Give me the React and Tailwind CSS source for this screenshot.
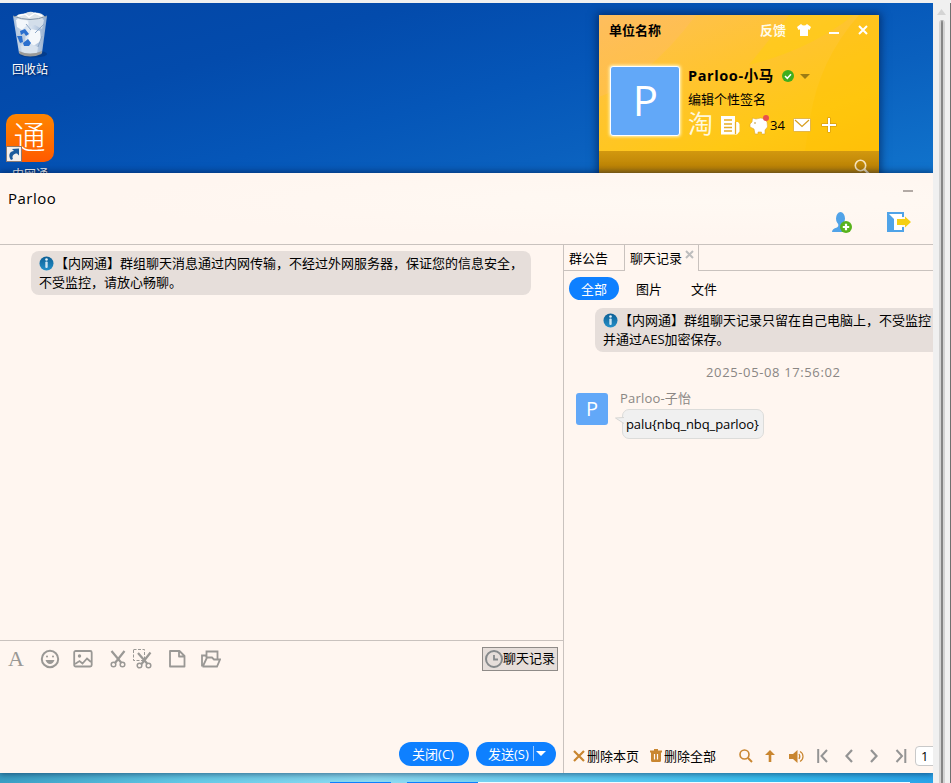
import React from 'react';

function RecycleBin() {
  return (
    <svg width="38" height="48" viewBox="0 0 38 48">
      <defs>
        <linearGradient id="bin" x1="0" x2="1">
          <stop offset="0" stopColor="#a9bfda" />
          <stop offset=".45" stopColor="#e3ebf4" />
          <stop offset="1" stopColor="#8ea9cc" />
        </linearGradient>
      </defs>
      <ellipse cx="22" cy="43" rx="14" ry="3.5" fill="#04306f" opacity=".5" />
      <path d="M2 5 L36 5 L31 42 Q19 47 8 42 Z" fill="url(#bin)" />
      <path d="M5 9 L12 5 L18 12 L11 19 L6 16 Z" fill="#f3f7fb" />
      <path d="M17 7 L27 5 L33 9 L31 18 L24 14 L18 16 Z" fill="#d3deea" />
      <path d="M20 18 L29 20 L30 30 L22 35 L17 28 Z" fill="#f5f8fb" />
      <path d="M7 23 L15 20 L14 31 L9 34 Z" fill="#b9cbe0" />
      <path d="M10 35 L18 32 L27 36 L26 42 L11 42 Z" fill="#d9e3ee" />
      <path d="M24 22 L33 13 M27 36 L31 25 M15 13 L20 19" stroke="#8fa8c6" strokeWidth="1" />
      <path d="M4 6 Q8 2 13 3 Q19 -1 24 2 Q30 1 34 6 Q28 10 19 9 Q10 10 4 6 Z" fill="#dfe5e9" />
      <path d="M7 5 L14 3 L18 6 L24 2 L31 5" stroke="#fff" strokeWidth="1.5" fill="none" />
      <path d="M2 5 Q19 12 36 5" stroke="#7c8fa3" strokeWidth="1" fill="none" />
      <path d="M8 40 Q19 45 31 40 L30.500 43 Q19 48 8.500 43 Z" fill="#9a9a98" />
      <g fill="#2a6fce">
        <path d="M9 20 L14 18 L18 23 L15 25 L13 22 L10 24 Z" />
        <path d="M6 25 L11 25 L12 31 L9 32 Z" />
        <path d="M12 32 L17 28 L20 32 L18 35 L13 35 Z" />
      </g>
    </svg>
  );
}

function InfoIcon() {
  return (
    <svg width="15" height="15" viewBox="0 0 15 15" className="mr-[5px] inline-block align-[-3px]">
      <defs>
        <linearGradient id="info" x1="0" y1="0" x2="0" y2="1">
          <stop offset="0" stopColor="#0d5f95" />
          <stop offset="1" stopColor="#2490c9" />
        </linearGradient>
      </defs>
      <circle cx="7.500" cy="7.500" r="7" fill="url(#info)" />
      <circle cx="7.500" cy="3.500" r="1.300" fill="#e7f3fa" />
      <rect x="6.300" y="5.600" width="2.400" height="6.400" rx="1" fill="#cfe5f2" />
    </svg>
  );
}

function Desktop() {
  return (
    <>
      <div className="absolute top-[8px] left-0 flex w-[60px] flex-col items-center text-[12px] text-white [text-shadow:1px_1px_2px_#001b50]">
        <RecycleBin />
        <span className="mt-[3px] leading-[16px]">回收站</span>
      </div>
      <div className="absolute top-[111px] left-[6px] flex w-[48px] flex-col items-center text-[12px] text-white [text-shadow:1px_1px_2px_#001b50]">
        <div className="relative flex h-[48px] w-[48px] items-center justify-center rounded-[10px] bg-gradient-to-b from-[#ff8500] to-[#ff5900] [text-shadow:none]">
          <span className="mt-[-3px] ml-[-1px] text-[32px] leading-[40px] font-light">通</span>
          <svg width="16" height="16" viewBox="0 0 16 16" className="absolute bottom-0 left-0">
            <rect x=".5" y=".5" width="15" height="15" fill="#f4efec" stroke="#8a7a74" />
            <path d="M5 14 C1.500 9 4 5 8 5 L6 3 L13 2.500 L13 9.500 L11 7.500 C7.500 7.500 5.500 10 7 13 Z" fill="#1c5a9c" />
          </svg>
        </div>
        <span className="mt-[5px] leading-[16px] whitespace-nowrap">内网通</span>
      </div>
    </>
  );
}

function ContactsWindow() {
  return (
    <div className="absolute top-[12px] left-[599px] flex h-[170px] w-[280px] flex-col bg-[linear-gradient(160deg,#fec056_0%,#ffc430_35%,#ffc814_65%,#ffbb08_100%)] text-[13px] shadow-[0_0_8px_2px_rgba(0,25,70,0.6)]">
      <div className="relative flex h-[136px] shrink-0 flex-col overflow-hidden">
        <svg className="absolute inset-0" width="280" height="136">
          <path d="M0 0 H97 Q72 34 43 57 Q20 75 0 82 Z" fill="#ffb870" opacity=".3" />
          <path d="M280 0 H260 Q220 45 211 104 L206 136 H280 Z" fill="#ffc400" opacity=".35" />
          <path d="M150 50 Q210 35 255 0 H190 Z" fill="#ffd500" opacity=".35" />
        </svg>
        <div className="relative flex h-[29px] items-center pr-[11px] pl-[10px]">
          <span className="flex-1 leading-[18px] font-bold">单位名称</span>
          <span className="mr-[11px] leading-[18px] font-bold text-[#fffbe9]">反馈</span>
          <svg width="14" height="12" viewBox="0 0 14 12" className="mt-px mr-[18px]">
            <path d="M4 0 Q7 3 10 0 L14 3 L12.500 6 L11 5.300 V12 H3 V5.300 L1.500 6 L0 3 Z" fill="#fff" />
          </svg>
          <span className="mt-[6px] mr-[19px] h-[2px] w-[10px] bg-white" />
          <svg width="10" height="10" viewBox="0 0 10 10">
            <path d="M1 1 L9 9 M9 1 L1 9" stroke="#fff" strokeWidth="2" />
          </svg>
        </div>
        <div className="relative flex pt-[22px] pl-[11px]">
          <div className="flex h-[70px] w-[70px] items-center justify-center rounded-[3px] border border-white bg-[#62a8f8] text-[42px] leading-[40px] text-white shadow-[0_0_3px_1px_#fff2b8]">
            <span className="mt-[-2px] ml-px">P</span>
          </div>
          <div className="flex flex-col pl-[8px]">
            <div className="flex h-[20px] items-center">
              <span className="w-[87px] text-[14.500px] leading-[20px] font-bold tracking-[0.6px] whitespace-nowrap">Parloo-小马</span>
              <svg width="12" height="12" viewBox="0 0 12 12" className="ml-[7px]">
                <circle cx="6" cy="6" r="6" fill="#3fae1e" />
                <path d="M3 6 L5.300 8.300 L9 4.300" stroke="#fff" strokeWidth="1.500" fill="none" />
              </svg>
              <svg width="10" height="5" viewBox="0 0 10 5" className="ml-[6px]">
                <path d="M0 0 H10 L5 5 Z" fill="#9c7c14" />
              </svg>
            </div>
            <span className="mt-[4px] leading-[18px]">编辑个性签名</span>
            <div className="mt-[5px] flex h-[24px] items-center">
              <span className="mt-[-4px] w-[25px] text-[25px] leading-[24px] text-[#fff8dc]">淘</span>
              <svg width="19" height="19" viewBox="0 0 19 19" className="ml-[8px]">
                <path d="M0 0 H14 V6 H17 L18.500 8 V15.500 L16 18.500 H0 Z" fill="#fff" />
                <path d="M3 4 H11 M3 8 H11 M3 11.500 H11 M3 15 H11 M14.500 6 V18" stroke="#e7ad25" strokeWidth="1.300" />
              </svg>
              <svg width="21" height="20" viewBox="0 0 21 20" className="ml-[9px]">
                <path d="M3 7 L3.500 3 L7 4 Q12 2 16 4 Q19 7 18.500 12 L16 15 V19 H12.500 V17 H9 V19 H6 L5 14 L1 12 V9 Z" fill="#fff" stroke="#dca62c" strokeWidth=".6" />
                <circle cx="6" cy="8" r=".8" fill="#b98a1c" />
                <circle cx="17" cy="3" r="3" fill="#ea4f4c" />
              </svg>
              <span className="w-[16px] text-[13px] leading-[18px]">34</span>
              <svg width="18" height="14" viewBox="0 0 18 14" className="ml-[7px]">
                <rect x=".5" y=".5" width="17" height="13" rx="1" fill="#fff" stroke="#cf9720" strokeWidth=".6" />
                <path d="M2 2 L9 8.500 L16 2" stroke="#d79e1e" strokeWidth="1.200" fill="none" />
              </svg>
              <svg width="16" height="16" viewBox="0 0 16 16" className="ml-[10px]">
                <path d="M8 .5 V15.500 M.5 8 H15.500" stroke="#c98f14" strokeWidth="3" />
                <path d="M8 1 V15 M1 8 H15" stroke="#fff" strokeWidth="2" />
              </svg>
            </div>
          </div>
        </div>
      </div>
      <div className="flex h-[34px] justify-end bg-[linear-gradient(#d2980f,#b27a00_24px)] pt-[8px] pr-[9px]">
        <svg width="16" height="16" viewBox="0 0 16 16">
          <circle cx="6.500" cy="6.500" r="5.200" stroke="#f8e5bd" strokeWidth="1.600" fill="none" />
          <path d="M10 10 L15 15" stroke="#f8e5bd" strokeWidth="2.200" />
        </svg>
      </div>
    </div>
  );
}

function ChatHeader() {
  return (
    <div className="flex h-[72px] shrink-0 justify-between border-b border-[#c9c2be] bg-[radial-gradient(ellipse_at_75%_40%,#fff9f3,#fff6f0_60%)]">
      <span className="pt-[14px] pl-[8px] text-[15px] leading-[22px] tracking-[0.5px]">Parloo</span>
      <div className="flex flex-col items-end pr-[20px]">
        <span className="mt-[17px] h-[2px] w-[10px] bg-[#b3aaa5]" />
        <div className="mt-[19px] flex pr-[2px]">
          <svg width="20" height="22" viewBox="0 0 20 22">
            <ellipse cx="8.500" cy="7.500" rx="4.500" ry="6.500" fill="#51a3e8" />
            <path d="M6 12 H11 L12 21 H0 Q0 17.500 5 16.500 Q7 15.500 6 12 Z" fill="#51a3e8" />
            <circle cx="14" cy="16" r="6" fill="#58b31c" />
            <path d="M14 12.800 V19.200 M10.800 16 H17.200" stroke="#fff" strokeWidth="2.200" />
          </svg>
          <svg width="24" height="22" viewBox="0 0 24 22" className="ml-[35px]">
            <rect x="0" y="1" width="17" height="20" fill="#4fa3e8" />
            <rect x="2" y="3" width="13" height="16" fill="#fff" />
            <path d="M0 1 L7 8 V21 H0 Z" fill="#4fa3e8" />
            <path d="M15 6 H18 V16 H15 Z" fill="#fff6f0" />
            <path d="M10 8 H18 V5.500 L24 11 L18 16.500 V14 H10 Z" fill="#f5cf13" />
          </svg>
        </div>
      </div>
    </div>
  );
}

function Toolbar() {
  return (
    <div className="flex h-[36px] items-center pr-[5px] pl-[8px] text-[#9a9895]">
      <span className="w-[16px] font-['Liberation_Serif',serif] text-[22px] leading-[20px]">A</span>
      <svg width="20" height="20" viewBox="0 0 20 20" className="ml-[16px]" fill="none" stroke="currentColor" strokeWidth="2">
        <circle cx="10" cy="10" r="8.200" />
        <path d="M5.500 11 H14.500 Q13 15 10 15 Q7 15 5.500 11 Z" fill="currentColor" stroke="none" />
        <circle cx="7" cy="7.500" r="1" fill="currentColor" stroke="none" />
        <circle cx="13" cy="7.500" r="1" fill="currentColor" stroke="none" />
      </svg>
      <svg width="20" height="18" viewBox="0 0 20 18" className="ml-[13px]" fill="none" stroke="currentColor" strokeWidth="1.800">
        <rect x="1.200" y="1" width="17.500" height="15.500" rx="1.500" />
        <path d="M2 14 L6.500 11 L9.500 13.500 L14 8.500 L18 12" />
        <circle cx="6.500" cy="6" r="1.700" fill="currentColor" stroke="none" />
      </svg>
      <svg width="17" height="18" viewBox="0 0 17 18" className="ml-[17px]" fill="none" stroke="currentColor">
        <path d="M1.500 1 L11.500 13 M14.500 1 L5 13" strokeWidth="2.200" />
        <circle cx="3.500" cy="14.500" r="2.300" strokeWidth="1.500" />
        <circle cx="12.500" cy="14.500" r="2.300" strokeWidth="1.500" />
      </svg>
      <svg width="20" height="21" viewBox="0 0 20 21" className="ml-[6px]" fill="none" stroke="currentColor">
        <rect x=".5" y=".5" width="11" height="11" strokeWidth="1" strokeDasharray="3 1.500" />
        <path d="M5 4 L14.500 15 M17.500 3.500 L8.500 15" strokeWidth="2.200" />
        <circle cx="6.500" cy="16.500" r="2.300" strokeWidth="1.500" />
        <circle cx="15.500" cy="16.500" r="2.300" strokeWidth="1.500" />
      </svg>
      <svg width="17" height="18" viewBox="0 0 17 18" className="ml-[16px]" fill="none" stroke="currentColor" strokeWidth="1.800">
        <path d="M2 1 H10.500 L15.500 6 V16.500 H1 V1 Z M10 1 V6.500 H15.500" strokeLinejoin="round" />
      </svg>
      <svg width="20" height="18" viewBox="0 0 20 18" className="ml-[15px]" fill="none" stroke="currentColor" strokeWidth="1.800">
        <path d="M1 16.500 V5.500 H4.500 L6 7 M5.500 8 V1.500 H16.500 V9 M1.500 16.500 H16 L19 9.500 H13 L11 7.500 H6 L2 16" />
      </svg>
      <div className="ml-auto flex h-[24px] w-[76px] items-center border border-[#8f8b88] bg-[#e6deda] pl-[2px] text-black">
        <svg width="18" height="18" viewBox="0 0 18 18" fill="none" stroke="#85898b">
          <circle cx="9" cy="9" r="8" strokeWidth="2" />
          <path d="M9 5 V9.500 H13" strokeWidth="1.800" />
        </svg>
        <span className="mt-[-2px] leading-[18px] whitespace-nowrap">聊天记录</span>
      </div>
    </div>
  );
}

function Conversation() {
  return (
    <div className="flex w-[563px] shrink-0 flex-col">
      <div className="h-[395px] pt-[6px] pl-[31px]">
        <div className="h-[44px] w-[500px] rounded-[8px] bg-[#e6deda] py-[3px] pl-[8px] leading-[19px] whitespace-nowrap">
          <InfoIcon />
          <span className="ml-[-4px]">【内网通】群组聊天消息通过内网传输，不经过外网服务器，保证您的信息安全，</span>
          <br />
          不受监控，请放心畅聊。
        </div>
      </div>
      <div className="flex h-[133px] flex-col border-t border-[#c9c2be]">
        <Toolbar />
        <div className="mt-[65px] flex justify-end gap-[7px] pr-[7px] text-white">
          <span className="flex h-[24px] w-[70px] items-center justify-center rounded-full bg-[#0e80ff] pr-[2px] pb-px leading-[18px]">关闭(C)</span>
          <span className="flex h-[24px] w-[80px] items-center rounded-full bg-[#0e80ff] pb-px pl-[12px] leading-[18px] whitespace-nowrap">
            <span className="w-[45px]">发送(S)</span>
            <span className="h-[15px] w-px bg-[#9bcaff]" />
            <svg width="10" height="5" viewBox="0 0 10 5" className="ml-[2px]">
              <path d="M0 0 H10 L5 5 Z" fill="#fff" />
            </svg>
          </span>
        </div>
      </div>
    </div>
  );
}

function HistoryFooter() {
  return (
    <div className="mt-auto flex h-[34px] shrink-0 items-center pl-[9px] text-[#c98630]">
      <svg width="12" height="12" viewBox="0 0 12 12" className="shrink-0">
        <path d="M1 1 L11 11 M11 1 L1 11" stroke="currentColor" strokeWidth="2.200" />
      </svg>
      <span className="mt-[-1px] ml-[2px] w-[52px] shrink-0 leading-[18px] whitespace-nowrap text-black">删除本页</span>
      <svg width="12" height="13" viewBox="0 0 12 13" className="mt-[-1px] ml-[11px] shrink-0" fill="currentColor">
        <path d="M4 0 H8 V1.500 H12 V3.500 H11 V11.500 Q11 13 9.500 13 H2.500 Q1 13 1 11.500 V3.500 H0 V1.500 H4 Z" />
        <path d="M4.500 5 V10.500 M7.500 5 V10.500" stroke="#fff6f0" strokeWidth="1.200" />
      </svg>
      <span className="mt-[-1px] ml-[2px] w-[52px] shrink-0 leading-[18px] whitespace-nowrap text-black">删除全部</span>
      <svg width="14" height="14" viewBox="0 0 14 14" className="ml-[23px] shrink-0" fill="none" stroke="currentColor">
        <circle cx="5.500" cy="5.500" r="4.500" strokeWidth="1.600" />
        <path d="M9 9 L13 13" strokeWidth="2" />
      </svg>
      <svg width="10" height="12" viewBox="0 0 10 12" className="ml-[12px] shrink-0" fill="currentColor">
        <path d="M5 0 L10 5 H6.300 V12 H3.700 V5 H0 Z" />
      </svg>
      <svg width="16" height="15" viewBox="0 0 16 15" className="ml-[14px] shrink-0" fill="currentColor">
        <path d="M0 5 H4 L8.500 1 V14 L4 10 H0 Z" />
        <path d="M10 5 Q11.700 7.500 10 10 M11 2.500 Q14 4 14 7.500 Q14 11 11 12.500" fill="none" stroke="currentColor" strokeWidth="1.200" />
      </svg>
      <svg width="12" height="14" viewBox="0 0 12 14" className="ml-[12px] shrink-0" fill="none" stroke="#949494" strokeWidth="2">
        <path d="M1.200 0 V14 M10 1 L4.500 7 L10 13" />
      </svg>
      <svg width="8" height="14" viewBox="0 0 8 14" className="ml-[16px] shrink-0" fill="none" stroke="#949494" strokeWidth="2.200">
        <path d="M7 1 L1.500 7 L7 13" />
      </svg>
      <svg width="8" height="14" viewBox="0 0 8 14" className="ml-[17px] shrink-0" fill="none" stroke="#949494" strokeWidth="2.200">
        <path d="M1 1 L6.500 7 L1 13" />
      </svg>
      <svg width="12" height="14" viewBox="0 0 12 14" className="ml-[17px] shrink-0" fill="none" stroke="#949494" strokeWidth="2">
        <path d="M1.500 1 L7 7 L1.500 13 M10.300 0 V14" />
      </svg>
      <span className="ml-[8px] h-[20px] w-[30px] shrink-0 rounded-[4px] border border-[#c9c9c9] bg-white pl-[5px] leading-[19px] text-black">1</span>
    </div>
  );
}

function History() {
  return (
    <div className="flex min-w-0 flex-1 flex-col overflow-hidden border-l border-[#c9c2be]">
      <div className="flex h-[26px] shrink-0">
        <span className="w-[61px] border-r border-b border-[#c9c2be] pl-[5px] leading-[26px] whitespace-nowrap">群公告</span>
        <span className="flex w-[74px] border-r border-[#c9c2be] pl-[5px] leading-[26px] whitespace-nowrap">
          <span className="w-[55px]">聊天记录</span>
          <svg width="9" height="9" viewBox="0 0 9 9" className="mt-[5px]">
            <path d="M1 1 L8 8 M8 1 L1 8" stroke="#bdbdbd" strokeWidth="2" />
          </svg>
        </span>
        <span className="flex-1 border-b border-[#c9c2be]" />
      </div>
      <div className="flex h-[37px] shrink-0 items-center pb-[2px] pl-[5px] leading-[18px]">
        <span className="flex h-[23px] w-[50px] items-center justify-center rounded-full bg-[#0e80ff] text-white">全部</span>
        <span className="ml-[17px]">图片</span>
        <span className="ml-[29px]">文件</span>
      </div>
      <div className="ml-[31px] h-[44px] w-[400px] shrink-0 rounded-[8px] bg-[#e6deda] py-[3px] pl-[8px] leading-[19px] whitespace-nowrap">
        <InfoIcon />
        <span className="ml-[-4px]">【内网通】群组聊天记录只留在自己电脑上，不受监控</span>
        <br />
        并通过AES加密保存。
      </div>
      <span className="mt-[11px] ml-[142px] leading-[18px] tracking-[0.63px] text-[#8a8684]">2025-05-08 17:56:02</span>
      <div className="mt-[8px] flex pl-[12px]">
        <span className="mt-[4px] flex h-[32px] w-[32px] items-center justify-center rounded-[3px] bg-[#62a8f8] text-[20px] leading-[20px] text-white">P</span>
        <div className="ml-[12px] flex flex-col">
          <span className="leading-[18px] tracking-[0.2px] text-[#8a8684]">Parloo-子怡</span>
          <div className="relative mt-[2px] ml-[2px] flex h-[30px] w-[142px] items-center rounded-[7px] border border-[#dcdcda] bg-[#f0f0f0] pl-[3px] leading-[18px] tracking-[-0.1px] whitespace-nowrap">
            palu{'{'}nbq_nbq_parloo{'}'}
            <svg width="9" height="8" viewBox="0 0 9 8" className="absolute top-[6px] left-[-8px]">
              <path d="M9 1.500 L0.500 2 L9 7.500" fill="#f0f0f0" stroke="#d6d6d4" />
            </svg>
          </div>
        </div>
      </div>
      <HistoryFooter />
    </div>
  );
}

export default function App() {
  return (
    <div className="flex h-[783px] w-[951px] overflow-hidden bg-[#f0f0f0] pt-[3px] font-['Open_Sans','Noto_Sans_CJK_SC',sans-serif] text-[13px] text-black">
      <div className="relative h-[780px] w-[933px] shrink-0 overflow-hidden bg-[linear-gradient(165deg,#0346a6_0px,#034bac_110px,#0556b8_210px,#0a60be_290px,#1072cb_400px)]">
        <Desktop />
        <ContactsWindow />
        <div className="absolute top-[770px] left-0 flex h-[10px] w-[933px] items-end bg-[linear-gradient(90deg,#3a9fc4,#63c9e6_20%,#8fdcf2_40%,#62cdf3_62%,#38c0f0_82%,#2aa5ea)]">
          <div className="ml-[330px] h-px w-[61px] bg-[#0e80ff]" />
          <div className="ml-[16px] h-px w-[71px] bg-[#0e80ff]" />
          <div className="h-px w-[432px] bg-[#f4fbff]" />
        </div>
        <div className="absolute top-[170px] left-0 flex h-[600px] w-[933px] flex-col bg-[#fff6f0] shadow-[0_0_7px_1px_rgba(0,20,60,0.6)]">
          <ChatHeader />
          <div className="flex min-h-0 flex-1">
            <Conversation />
            <History />
          </div>
        </div>
      </div>
      <div className="flex flex-1 border-r border-[#707070] pl-[3px]">
        <div className="flex w-[11px] flex-col items-center pt-[6px]">
          <svg width="9" height="6" viewBox="0 0 9 6">
            <path d="M4.500 0 L9 6 H0 Z" fill="#d4d4d4" />
          </svg>
          <div className="mt-[5px] w-[6px] flex-1 rounded-t-[3px] border-x-2 border-[#d2d2d2] bg-[#858585]" />
        </div>
      </div>
    </div>
  );
}
